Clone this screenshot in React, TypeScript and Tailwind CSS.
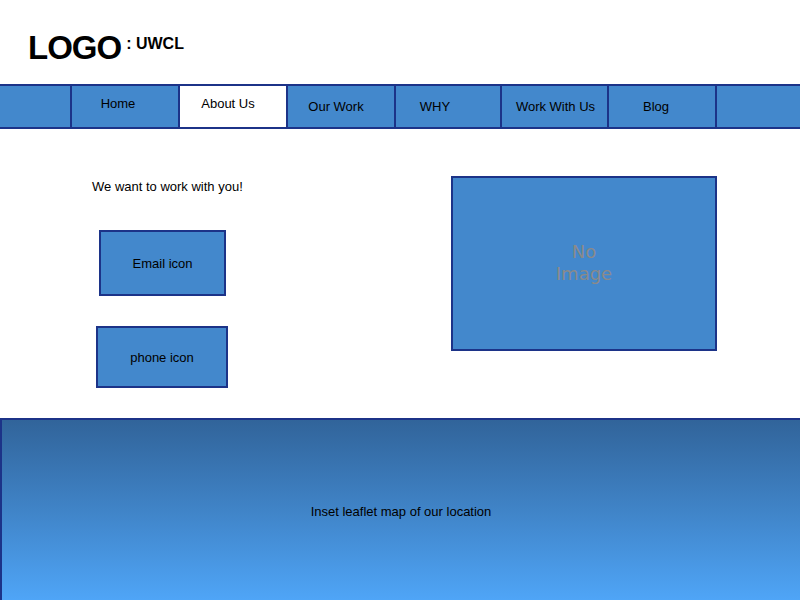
const navItems = [
  { label: '', width: 'w-[72px]', pad: '' },
  { label: 'Home', width: 'w-[108px]', pad: 'pr-[14px]', raised: true },
  { label: 'About Us', width: 'w-[108px]', pad: 'pr-[10px]', active: true, raised: true },
  { label: 'Our Work', width: 'w-[108px]', pad: 'pr-[10px]' },
  { label: 'WHY', width: 'w-[106px]', pad: 'pr-[26px]' },
  { label: 'Work With Us', width: 'w-[107px]', pad: 'pl-[2px]' },
  { label: 'Blog', width: 'w-[108px]', pad: 'pr-[12px]' },
  { label: '', width: 'flex-1', pad: '', last: true },
];

export default function App() {
  return (
    <div className="w-[800px] h-[600px] bg-white overflow-hidden flex flex-col font-['Liberation_Sans',Arial,sans-serif] text-black">
      {/* header */}
      <div className="h-[84px] flex items-start pl-[28px] pt-[31px]">
        <span className="text-[33px] font-bold leading-none tracking-[-1px]">LOGO</span>
        <span className="ml-[5px] mt-[5px] text-[16px] font-bold leading-none">: UWCL</span>
      </div>

      {/* nav */}
      <nav className="h-[45px] flex border-y-2 border-[#1c3388] bg-[#4388cc]">
        {navItems.map((item, i) => (
          <div
            key={i}
            className={`${item.width} ${item.pad} ${item.last ? '' : 'border-r-2'} border-[#1c3388] flex justify-center text-[13px] ${
              item.raised ? 'pt-[8px]' : 'pt-[11px]'
            } ${item.active ? 'bg-white' : ''}`}
          >
            {item.label}
          </div>
        ))}
      </nav>

      {/* content */}
      <div className="h-[289px] flex">
        <div className="w-[451px] pl-[92px] pt-[50px]">
          <p className="text-[13px] leading-[16px]">We want to work with you!</p>
          <div className="ml-[7px] mt-[35px] w-[127px] h-[66px] border-2 border-[#1c3388] bg-[#4388cc] flex items-center justify-center text-[13px] pt-[2px]">
            Email icon
          </div>
          <div className="ml-[4px] mt-[30px] w-[132px] h-[62px] border-2 border-[#1c3388] bg-[#4388cc] flex items-center justify-center text-[13px] pt-[2px]">
            phone icon
          </div>
        </div>
        <div className="pt-[47px]">
          <div className="w-[266px] h-[175px] border-2 border-[#1c3388] bg-[#4388cc] flex items-center justify-center">
            <span className="text-center text-[18px] leading-[22px] text-[#8a8a8a] font-['DejaVu_Sans',sans-serif] pb-[2px]">
              No
              <br />
              Image
            </span>
          </div>
        </div>
      </div>

      {/* map */}
      <div className="flex-1 border-t-2 border-l-2 border-[#1c3388] bg-gradient-to-b from-[#31649a] to-[#4fa5f7] flex items-center justify-center text-[13px] pt-[4px]">
        Inset leaflet map of our location
      </div>
    </div>
  );
}
